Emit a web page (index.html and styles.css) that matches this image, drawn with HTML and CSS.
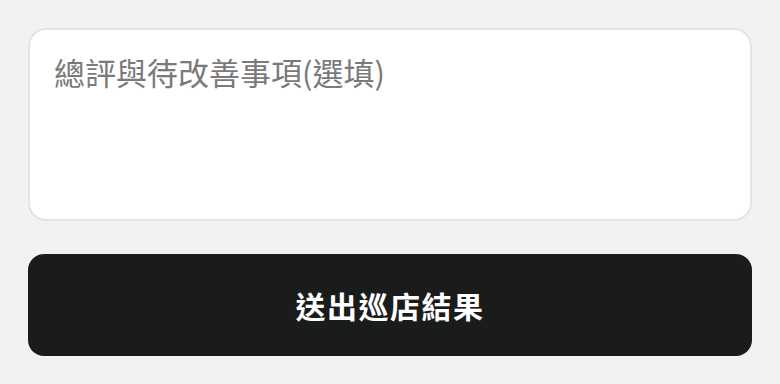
FILE: index.html
```html
<!DOCTYPE html>
<html lang="zh-TW">
<head>
    <meta charset="UTF-8">
    <meta name="viewport" content="width=device-width, initial-scale=1.0">
    <title>巡店表單</title>
    <link rel="stylesheet" href="styles.css">
</head>
<body>
    <div class="form">
        <div class="hint">滿分/5分 (請依實際情況評分)</div>

        <textarea class="note" placeholder="總評與待改善事項(選填)"></textarea>

        <button class="submit-btn">送出巡店結果</button>
    </div>
</body>
</html>
```

FILE: styles.css
```css
* {
    margin: 0;
    padding: 0;
    box-sizing: border-box;
    font-family: 'Noto Sans CJK TC', 'Noto Sans', sans-serif;
}

body {
    background: #f2f2f0;
    color: #333;
    overflow: hidden;
}

.form {
    padding: 0 28px;
    display: flex;
    flex-direction: column;
}

.hint {
    height: 28px;
    margin-top: -29px;
    margin-bottom: 29px;
    font-size: 22px;
    line-height: 28px;
    color: #555;
    white-space: nowrap;
}

.note {
    width: 100%;
    height: 193px;
    border: 2px solid #e4e4e4;
    border-radius: 18px;
    background: #fff;
    padding: 19px 24px;
    font-size: 31px;
    line-height: 1.5;
    color: #333;
    resize: none;
    outline: none;
}

.note::placeholder {
    color: #7a7a7a;
}

.submit-btn {
    margin-top: 33px;
    width: 100%;
    height: 102px;
    border: none;
    border-radius: 16px;
    background: #1a1c1c;
    color: #fff;
    font-size: 30px;
    font-weight: bold;
    letter-spacing: 1.5px;
    cursor: pointer;
}
```
